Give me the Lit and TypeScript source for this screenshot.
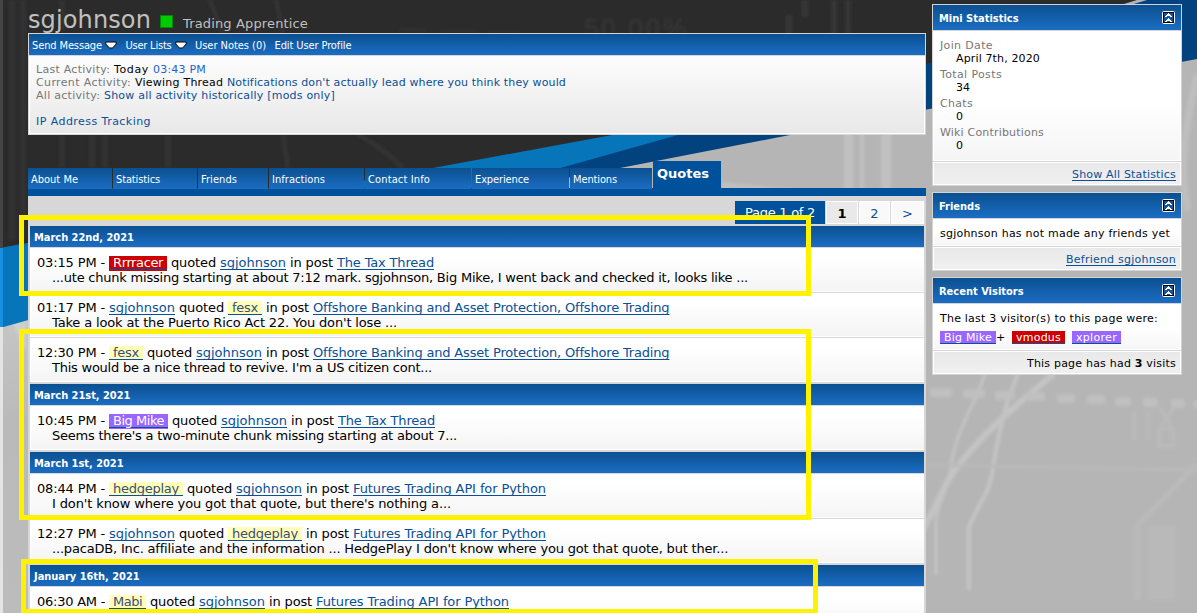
import { LitElement, html, css, svg } from "lit";
import { customElement, property } from "lit/decorators.js";

type Tone = "plain" | "elite" | "mod" | "vip";
interface Person { name: string; tone: Tone; w: number; }
interface Thread { title: string; w: number; }
interface Quote { time: string; from: Person; to: Person; thread: Thread; text: string; w: number; }

const sg: Person = { name: "sgjohnson", tone: "plain", w: 66 };
const fesx: Person = { name: "fesx", tone: "elite", w: 26 };
const hedge: Person = { name: "hedgeplay", tone: "elite", w: 66 };
const offshore: Thread = { title: "Offshore Banking and Asset Protection, Offshore Trading", w: 356 };
const api: Thread = { title: "Futures Trading API for Python", w: 193 };
const tax: Thread = { title: "The Tax Thread", w: 97 };

const days: { date: string; quotes: Quote[] }[] = [
  { date: "March 22nd, 2021", quotes: [
    { time: "03:15 PM", from: { name: "Rrrracer", tone: "mod", w: 50 }, to: sg, thread: tax, text: "...ute chunk missing starting at about 7:12 mark. sgjohnson, Big Mike, I went back and checked it, looks like ...", w: 696 },
    { time: "01:17 PM", from: sg, to: fesx, thread: offshore, text: "Take a look at the Puerto Rico Act 22. You don't lose ...", w: 345 },
    { time: "12:30 PM", from: fesx, to: sg, thread: offshore, text: "This would be a nice thread to revive. I'm a US citizen cont...", w: 380 },
  ] },
  { date: "March 21st, 2021", quotes: [
    { time: "10:45 PM", from: { name: "Big Mike", tone: "vip", w: 51 }, to: sg, thread: tax, text: "Seems there's a two-minute chunk missing starting at about 7...", w: 405 },
  ] },
  { date: "March 1st, 2021", quotes: [
    { time: "08:44 PM", from: hedge, to: sg, thread: api, text: "I don't know where you got that quote, but there's nothing a...", w: 399 },
    { time: "12:27 PM", from: sg, to: hedge, thread: api, text: "...pacaDB, Inc. affiliate and the information ... HedgePlay I don't know where you got that quote, but ther...", w: 676 },
  ] },
  { date: "January 16th, 2021", quotes: [
    { time: "06:30 AM", from: { name: "Mabi", tone: "elite", w: 29 }, to: sg, thread: api, text: "", w: 0 },
  ] },
];

const tabs = [
  ["About Me", 84, 47], ["Statistics", 84, 44], ["Friends", 70, 36], ["Infractions", 95, 53],
  ["Contact Info", 106, 62], ["Experience", 97, 54], ["Mentions", 82, 44],
] as const;

@customElement("page-backdrop")
class PageBackdrop extends LitElement {
  static styles = css`
    :host { position: absolute; inset: 0; overflow: hidden; }
    svg { display: block; }
    .figure { font: 26px "Liberation Sans", Arial, sans-serif; }
  `;
  render() {
    const dashes = [[930, 392, 22], [963, 393, 22], [995, 395, 20], [1025, 396, 20], [1057, 398, 18], [1087, 399, 18], [1115, 401, 16], [1143, 402, 15], [1171, 403, 14], [1194, 404, 10]];
    return html`<svg width="1197" height="613" viewBox="0 0 1197 613">
      <defs>
        <filter id="soft" x="-20%" y="-20%" width="140%" height="140%"><feGaussianBlur stdDeviation="1.6" /></filter>
        <linearGradient id="left" x1="0" x2="0" y1="0" y2="1">
          <stop offset="0" stop-color="#c6c6c6" /><stop offset=".35" stop-color="#bababa" /><stop offset="1" stop-color="#bcbcbc" />
        </linearGradient>
      </defs>
      <rect width="1197" height="613" fill="#b5b5b5" />
      <rect y="315" width="28" height="298" fill="url(#left)" />
      <g filter="url(#soft)">
        <path d="M722 182L800 190L721 190Z" fill="#c0c0c0" />
        <path d="M844 120h9v75h-9zM860 120h4v75h-4zM881 120h10v75h-10z" fill="#c1c1c1" />
        <path d="M12 322H26V350Z" fill="#d0d0d0" />
        <g fill="none" stroke="#c4c4c4">
          <path d="M985 374C976 402 954 433 950 472C945 500 937 500 936 525V575" stroke-width="3" />
          <path d="M1054 374C1015 405 980 437 958 466C942 486 933 515 921 532V600" stroke-width="6" />
          <path d="M1018 374C1006 400 999 431 994 462C989 496 985 492 969 526V590" stroke-width="4" />
          <path d="M926 465L1197 470" stroke="#bababa" stroke-width="3" />
          <path d="M1137 526L1197 464" stroke="#bababa" stroke-width="6" />
          <path d="M1197 75C1182 140 1180 175 1188 210" stroke="#bebebe" stroke-width="7" />
          <path d="M1134 411V440M1148 411V440" stroke="#bababa" stroke-width="4" />
          <path d="M1160 408L1172 428M1174 408L1160 428M1159 429h14v17h-14z" stroke="#bababa" stroke-width="4" />
        </g>
        <path d="M1134 525h7v75h-7zM1148 525h28v75h-28z" fill="#b9b9b9" />
        <g fill="#c0c0c0">${dashes.map(([x, y, w]) => svg`<rect x=${x} y=${y - 4} width=${w} height="9" rx="3" />`)}</g>
      </g>
      <path d="M0 0H1137L926 65L560 168L0 256Z" fill="#2b2b2b" />
      <g filter="url(#soft)" fill="none" stroke="#313131">
        <path d="M12 0V240M23 0V240M62 0V30M62 135V168M92 135V168M105 135V168M168 135V168" stroke-width="6" />
        <path d="M210 0L223 34M276 0L283 34M283 135L288 168M357 134Q383 148 403 168" stroke="#343434" stroke-width="4" />
        <path d="M400 30H425M440 32H475M487 33H520" stroke-width="3" />
        <path d="M834 0V34M848 0V34" stroke="#383838" stroke-width="5" />
        <path d="M805 0V17M789 15V34" stroke="#363636" stroke-width="7" />
      </g>
      <text class="figure" x="584" y="37" textLength="102" fill="#383838" filter="url(#soft)">50.00%</text>
      <path d="M0 248L612 135L926 77V66L678 136L560 170L0 328Z" fill="#0775ba" />
      <path d="M447 200L678 135L926 64L1137 3L1147 0H1197V59L790 135L620 168Z" fill="#02427f" />
      <rect width="3" height="248" fill="#444" /><rect y="248" width="3" height="79" fill="#1790df" /><rect y="327" width="3" height="286" fill="#e4e4e4" />
    </svg>`;
  }
}

@customElement("side-card")
class SideCard extends LitElement {
  @property() heading = "";
  static styles = css`
    :host { display: flex; flex-direction: column; box-sizing: border-box; border: 1px solid #d4d4d4; font: 11px/13px "DejaVu Sans", Verdana, sans-serif; color: #000; }
    .head { height: 25px; flex: none; display: flex; align-items: center; justify-content: space-between; padding: 0 6px; border-bottom: 1px solid #d4d4d4; background: linear-gradient(#0b5090, #1b6dc3); color: #fff; font: bold 11px "DejaVu Sans Condensed", Tahoma, sans-serif; }
    .head span { padding-top: 2px; }
    .body { flex: 1; border: 1px solid #fff; border-top: 0; padding: 0 6px; background: linear-gradient(#fff 55%, #f5f5f5); }
    .foot { height: 21px; flex: none; border: 1px solid #fff; padding-right: 4px; background: linear-gradient(#e9e9e9, #f0f0f0); text-align: right; line-height: 23px; box-shadow: 0 -1px #d4d4d4; margin-top: 1px; }
  `;
  render() {
    return html`<div class="head"><span>${this.heading}</span>
      <svg width="13" height="13" viewBox="0 0 13 13"><rect x=".5" y=".5" width="12" height="12" rx="1" fill="#000" stroke="#fff" /><rect x="2" y="2" width="9" height="9" fill="#14569b" /><path d="M6 2h1v1h1v1h1v1h1v1H8V5H5v1H3V5h1V4h1V3h1zM6 7h1v1h1v1h1v1h1v1H8v-1H5v1H3v-1h1V9h1V8h1z" fill="#fff" /></svg></div>
      <div class="body"><slot></slot></div><div class="foot"><slot name="foot"></slot></div>`;
  }
}

@customElement("app-root")
class AppRoot extends LitElement {
  static styles = css`
    :host { display: block; position: relative; width: 1197px; height: 613px; overflow: hidden; font: 11px/13px "DejaVu Sans", Verdana, sans-serif; color: #000; }
    .page { position: relative; display: grid; grid-template-columns: 898px 250px; column-gap: 6px; padding-left: 28px; align-items: start; }
    .title { display: flex; align-items: baseline; height: 33px; color: #c0c0c0; }
    .name { font-size: 24px; line-height: 40px; width: 132px; white-space: nowrap; }
    .online { width: 11px; height: 11px; border: 1px solid #008a00; background: #00cc00; margin-right: 10px; }
    .rank { font-size: 13px; white-space: nowrap; }
    .box { border: 1px solid #d6d6d6; height: 100px; display: flex; flex-direction: column; }
    .tools { height: 21px; display: flex; align-items: center; padding-left: 3px; gap: 8.5px; border-bottom: 1px solid #d6d6d6; }
    .tools, .day, .tab { background: linear-gradient(#0b5090, #1b6dc3); color: #fff; font: 11px "DejaVu Sans Condensed", Tahoma, sans-serif; white-space: nowrap; }
    .item { display: flex; align-items: center; gap: 3px; padding-top: 1px; }
    .info { flex: 1; border: 1px solid #fff; border-top: 0; padding: 7px 6px 0; background: linear-gradient(#fdfdfd, #e8e8e8); }
    .info p { margin: 0; height: 13px; white-space: pre; }
    .info .gap { margin-top: 13px; }
    .muted, dt { color: #777; }
    .link { color: #0a4f97; }
    .hour { color: #1a62cc; }
    u { color: #0a4f97; text-decoration: underline; text-underline-offset: 2px; text-decoration-skip-ink: none; }
    .tabs { display: flex; align-items: flex-end; margin-top: 26px; height: 27px; }
    .tab { height: 21px; margin: 0 1px -1px 0; box-sizing: border-box; padding: 5px 0 0 3px; }
    .tab.on { height: 27px; width: 68px; margin: 0; background: #00519b; font: bold 13px "DejaVu Sans", Verdana, sans-serif; padding: 5px 0 0 4px; }
    .panel { border-top: 8px solid #00519b; background: #d7d7d7; padding: 5px 2px 0; height: 412px; }
    .pager { display: flex; justify-content: flex-end; gap: 1px; height: 23px; margin-bottom: 2px; font-size: 13px; line-height: 24px; text-align: center; white-space: nowrap; }
    .pager div { box-sizing: border-box; width: 31px; border: 1px solid #fff; background: #f9f9f9; line-height: 23px; }
    .pager .count { width: 90px; background: #00519b; border: 0; color: #fff; line-height: 24px; }
    .pager .here { width: 32px; background: #e9e9e9; color: #000; font-weight: bold; }
    .pager .next { width: 33px; }
    .day { height: 21px; line-height: 23px; padding-left: 4px; font-weight: bold; border-bottom: 1px solid #d7d7d7; letter-spacing: -0.03px; }
    .quote { height: 44px; box-sizing: border-box; border: 1px solid #fff; border-width: 0 0 1px 1px; padding: 7px 6px 0; margin-bottom: 1px; background: linear-gradient(#fff 25%, #f4f4f4); font-size: 13px; line-height: 15px; white-space: pre; }
    .quote.last { margin-bottom: 2px; }
    .quote p { margin: 0; }
    .quote .text { padding-left: 15px; }
    .badge { padding: 0 4px; white-space: pre; display: inline-block; height: 13px; line-height: 13px; border-bottom: 1px solid #0a4f97; }
    .elite { background: #ffffb5; color: #3a4d80; }
    .mod { background: #cc0000; color: #fff; }
    .vip { background: #9966ff; color: #fff; }
    .quote .mod { box-shadow: 0 1px #cc0000; }
    .quote .vip { box-shadow: 0 1px #9966ff; }
    .side { display: flex; flex-direction: column; gap: 6px; padding-top: 4px; white-space: nowrap; }
    .stats { height: 182px; } .friends { height: 79px; } .visitors { height: 98px; }
    dl { margin: 8px 0 0; } dd { margin: 0 0 3px 16px; }
    .line { padding-top: 8px; }
    .people { padding-top: 6px; display: flex; }
    .people .badge { height: 12px; line-height: 13px; }
    .people .plus { width: 16px; }
    .people .badge + .badge { margin-left: 7px; }
    .mark { position: absolute; border: 5px solid #fff200; box-sizing: border-box; z-index: 2; }
    .m1 { left: 19px; top: 215px; width: 792px; height: 81px; }
    .m2 { left: 19px; top: 329px; width: 792px; height: 191px; }
    .m3 { left: 21px; top: 559px; width: 797px; height: 54px; border-bottom-width: 4px; }
  `;

  /* Tracks every run marked with data-w so that it sets to that width in pixels. */
  async updated() {
    const cards = [...this.renderRoot.querySelectorAll("side-card")] as SideCard[];
    await Promise.all(cards.map(c => c.updateComplete));
    for (const el of this.renderRoot.querySelectorAll<HTMLElement>("[data-w]")) {
      el.style.letterSpacing = "0";
      const n = (el.textContent ?? "").length;
      const now = el.getBoundingClientRect().width;
      if (n && now) el.style.letterSpacing = `${(Number(el.dataset.w) - now) / n}px`;
    }
  }

  private run(text: string, w: number, cls = "") {
    return html`<span class=${cls} data-w=${w}>${text}</span>`;
  }
  private arrow() {
    return html`<svg width="12" height="8" viewBox="0 0 12 8"><path d="M.8 1h10.4v2L7.6 7H4.4L.8 3z" fill="#fff" stroke="#000" stroke-width="1" /></svg>`;
  }
  private person(p: Person) {
    return p.tone === "plain" ? html`<u data-w=${p.w}>${p.name}</u>` : html`<span class="badge ${p.tone}">${this.run(p.name, p.w)}</span>`;
  }

  render() {
    const r = this.run;
    return html`<page-backdrop></page-backdrop>
      <div class="page">
        <main>
          <div class="title"><div class="name">${r("sgjohnson", 123)}</div><span class="online"></span><div class="rank">${r("Trading Apprentice", 125)}</div></div>
          <div class="box">
            <div class="tools"><div class="item">${r("Send Message", 70)}${this.arrow()}</div><div class="item">${r("User Lists", 46)}${this.arrow()}</div><div class="item">${r("User Notes (0)", 71)}</div><div class="item">${r("Edit User Profile", 77)}</div></div>
            <div class="info">
              <p>${r("Last Activity: ", 78, "muted")}${r("Today ", 39)}${r("03:43 PM", 53, "hour")}</p>
              <p>${r("Current Activity: ", 99, "muted")}${r("Viewing Thread ", 92)}${r("Notifications don't actually lead where you think they would", 339, "link")}</p>
              <p>${r("All activity: ", 68, "muted")}${r("Show all activity historically [mods only]", 231, "link")}</p>
              <p class="gap">${r("IP Address Tracking", 115, "link")}</p>
            </div>
          </div>
          <div class="tabs">${tabs.map(([label, w, tw]) => html`<div class="tab" style="width:${w}px">${r(label, tw)}</div>`)}<div class="tab on">Quotes</div></div>
          <div class="panel">
            <div class="pager"><div class="count">${r("Page 1 of 2", 70)}</div><div class="here">1</div><div class="link">2</div><div class="link next">&gt;</div></div>
            ${days.map(d => html`<div class="day">${d.date}</div>${d.quotes.map((q, i) => html`<div class="quote ${i === d.quotes.length - 1 ? "last" : ""}"><p>${r(q.time + " - ", 72)}${this.person(q.from)}${r(" quoted ", 53)}${this.person(q.to)}${r(" in post ", 51)}<u data-w=${q.thread.w}>${q.thread.title}</u></p><p class="text">${r(q.text, q.w)}</p></div>`)}`)}
          </div>
        </main>
        <aside class="side">
          <side-card class="stats" heading="Mini Statistics">
            <dl><dt>${r("Join Date", 53)}</dt><dd>${r("April 7th, 2020", 84)}</dd><dt>${r("Total Posts", 62)}</dt><dd>34</dd><dt>${r("Chats", 33)}</dt><dd>0</dd><dt>${r("Wiki Contributions", 104)}</dt><dd>0</dd></dl>
            <u slot="foot" data-w="104">Show All Statistics</u>
          </side-card>
          <side-card class="friends" heading="Friends"><div class="line">${r("sgjohnson has not made any friends yet", 230)}</div><u slot="foot" data-w="110">Befriend sgjohnson</u></side-card>
          <side-card class="visitors" heading="Recent Visitors">
            <div class="line">${r("The last 3 visitor(s) to this page were:", 218)}</div>
            <div class="people"><span class="badge vip">${r("Big Mike", 48)}</span><span class="plus">+</span><span class="badge mod">${r("vmodus", 45)}</span><span class="badge vip">${r("xplorer", 41)}</span></div>
            <span slot="foot" data-w="149">This page has had <b>3</b> visits</span>
          </side-card>
        </aside>
      </div>
      <div class="mark m1"></div><div class="mark m2"></div><div class="mark m3"></div>`;
  }
}
